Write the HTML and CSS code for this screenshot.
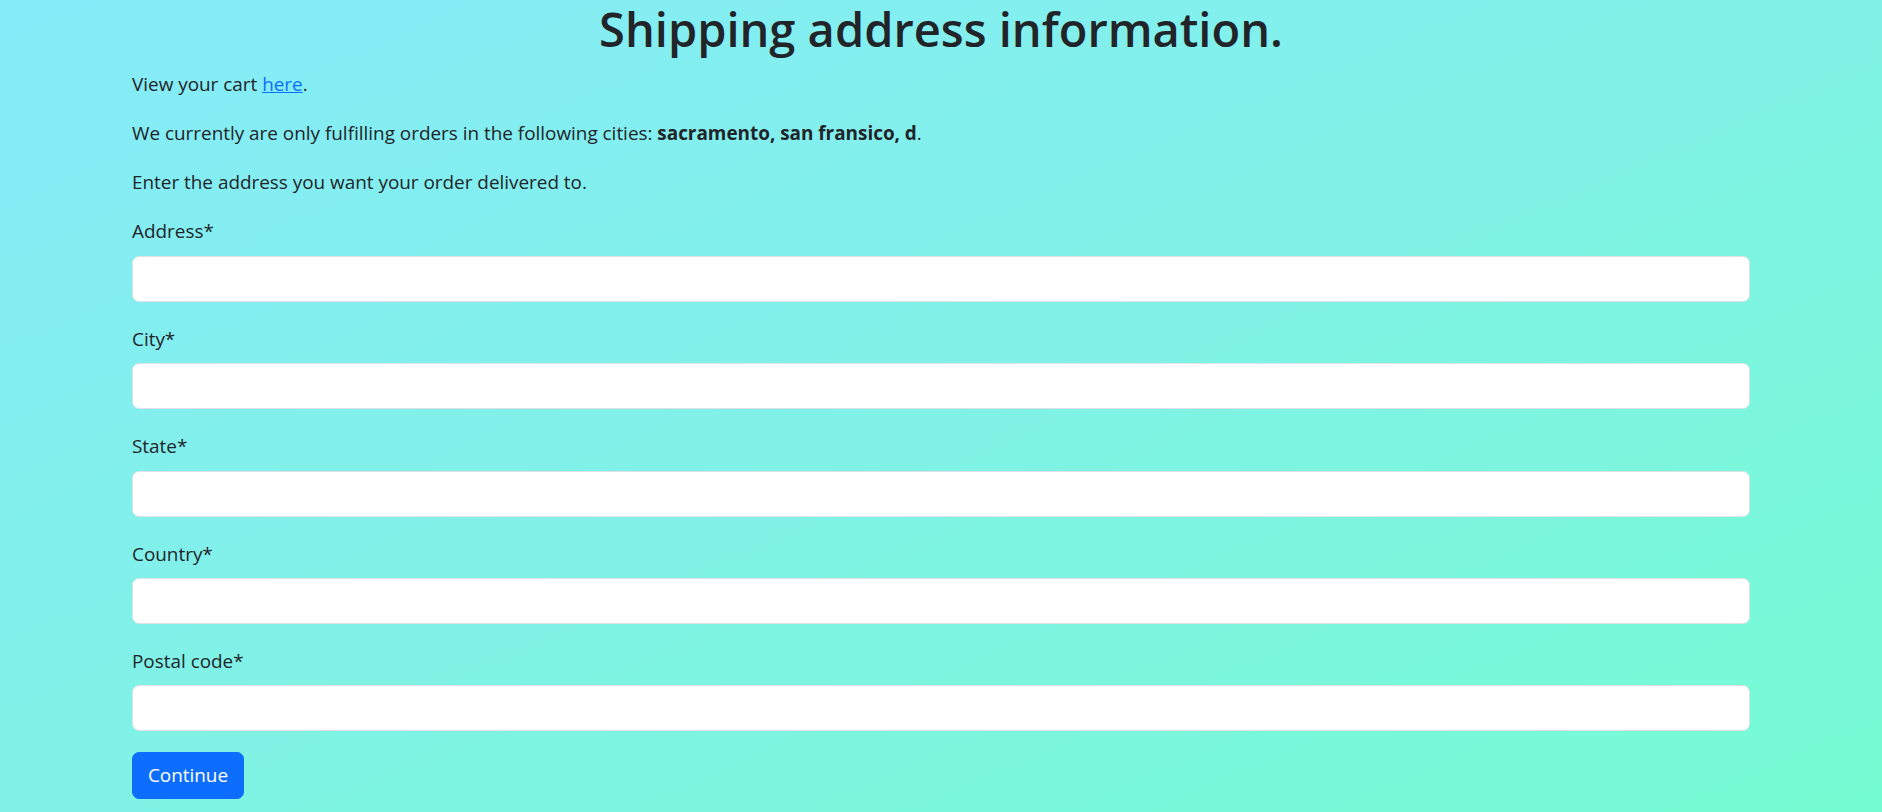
FILE: index.html
```html
<!DOCTYPE html>
<html lang="en">
<head>
<meta charset="utf-8">
<title>Shipping address information</title>
<link rel="stylesheet" href="styles.css">
</head>
<body>
<main class="container">
  <h1 class="title">Shipping address information.</h1>
  <p class="text">View your cart <a href="#" class="link">here</a>.</p>
  <p class="text">We currently are only fulfilling orders in the following cities: <b>sacramento, san fransico, d</b>.</p>
  <p class="text">Enter the address you want your order delivered to.</p>
  <form class="form">
    <div class="group">
      <label class="label" for="address">Address*</label>
      <input class="input" id="address" type="text">
    </div>
    <div class="group">
      <label class="label" for="city">City*</label>
      <input class="input" id="city" type="text">
    </div>
    <div class="group">
      <label class="label" for="state">State*</label>
      <input class="input" id="state" type="text">
    </div>
    <div class="group">
      <label class="label" for="country">Country*</label>
      <input class="input" id="country" type="text">
    </div>
    <div class="group group-last">
      <label class="label" for="postal">Postal code*</label>
      <input class="input" id="postal" type="text">
    </div>
    <button class="btn" type="button">Continue</button>
  </form>
</main>
</body>
</html>
```
FILE: styles.css
```css
html, body {
  margin: 0;
  padding: 0;
  min-height: 100%;
}
body {
  background: linear-gradient(to bottom right, #86ebf9 0%, #80f2e6 50%, #76fcd3 100%);
  background-attachment: fixed;
  min-height: 812px;
  font-family: "Open Sans", "Noto Sans", sans-serif;
  font-size: 18.9px;
  line-height: 28.8px;
  color: #212529;
}
.container {
  max-width: 1618px;
  margin: 0 auto;
}
.title {
  margin: 0 0 11.5px;
  font-size: 47px;
  font-weight: 600;
  line-height: 58px;
  text-align: center;
  color: #212529;
}
.text {
  margin: 0 0 20.5px;
}
.text b {
  font-weight: 700;
}
.link {
  color: #0d6efd;
  text-decoration: underline;
}
.form {
  margin: 0;
}
.group {
  margin-bottom: 23px;
}
.group-last {
  margin-bottom: 21px;
}
.label {
  display: block;
  margin-bottom: 9.6px;
}
.input {
  display: block;
  box-sizing: border-box;
  width: 100%;
  height: 46px;
  margin: 0;
  padding: 7px 14px;
  border: 1px solid #dee2e6;
  border-radius: 7px;
  background: #fff;
  font: inherit;
  color: #212529;
}
.btn {
  display: inline-flex;
  align-items: center;
  justify-content: center;
  box-sizing: border-box;
  width: 112px;
  height: 47px;
  padding: 0 14px;
  border: 1px solid #0d6efd;
  border-radius: 7px;
  background: #0d6efd;
  color: #fff;
  font: inherit;
  cursor: pointer;
}
```
